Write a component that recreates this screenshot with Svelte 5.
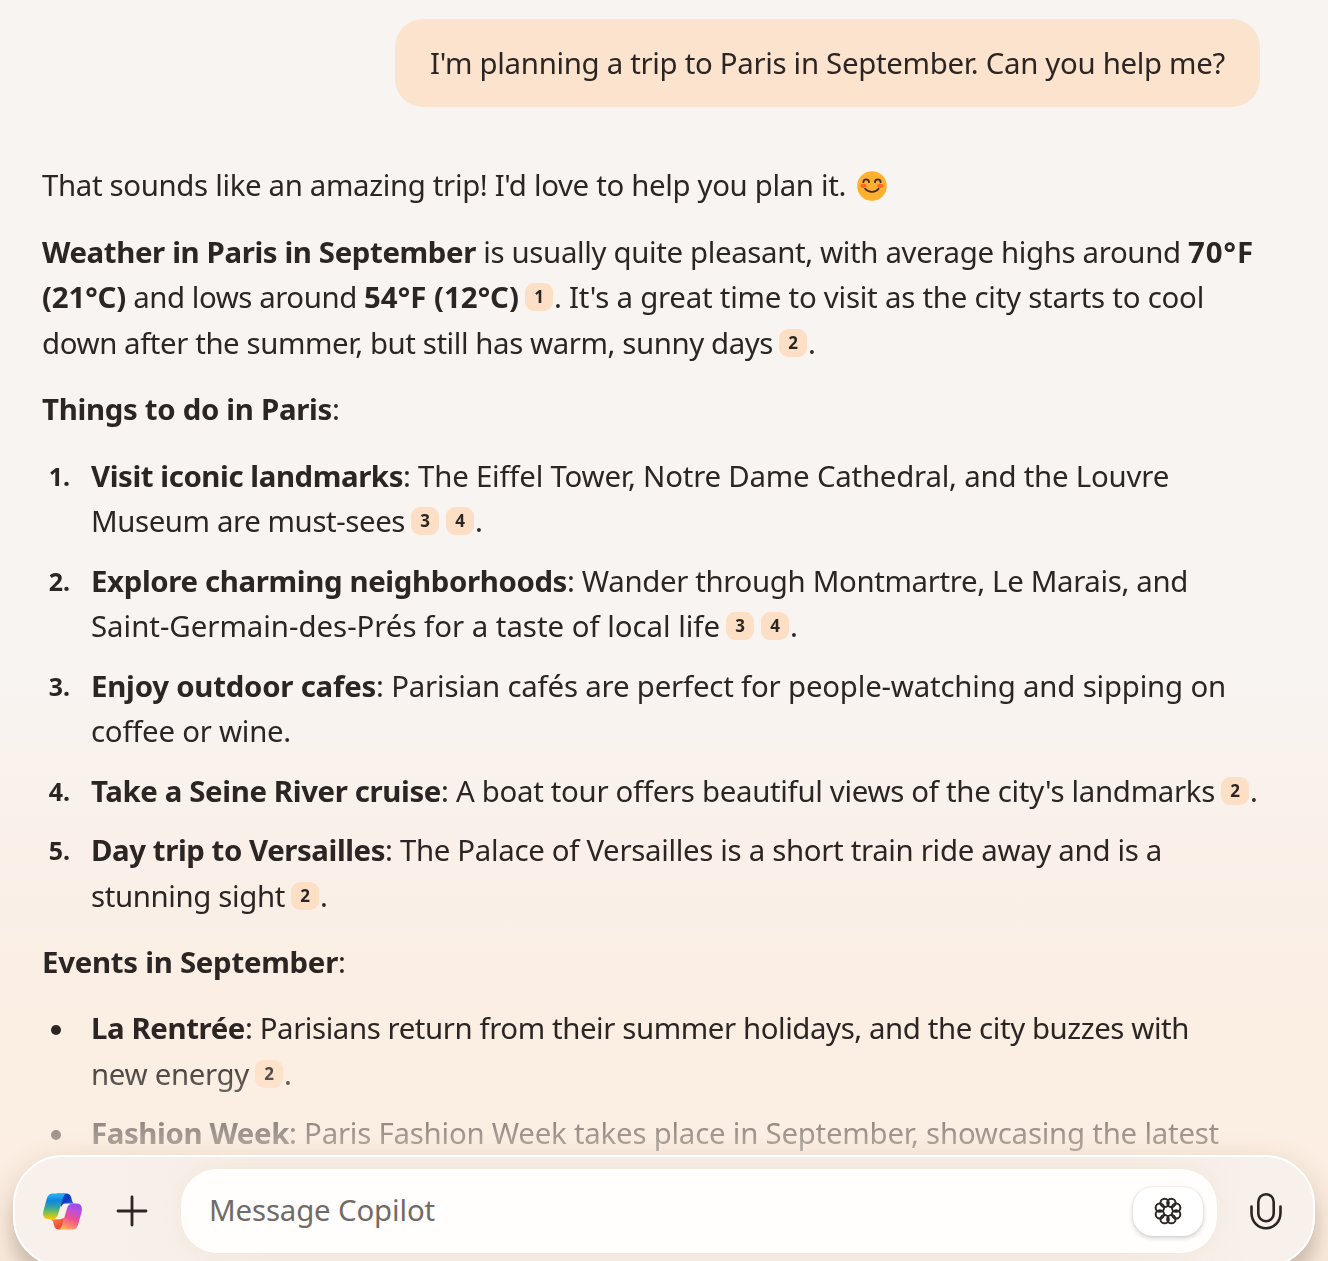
<script>
  // Run kinds: t = regular text, b = bold text, c = citation badge, e = smiling emoji.
  // w is the advance width of the run in pixels.
  const t = (text, w) => ({ kind: 't', text, w });
  const b = (text, w) => ({ kind: 'b', text, w });
  const c = (text) => ({ kind: 'c', text });
  const dot = t('.', 8);

  const prompt = [t("I'm planning a trip to Paris in September. Can you help me?", 795)];

  const intro = [
    [[t("That sounds like an amazing trip! I'd love to help you plan it.", 804), { kind: 'e' }]],
    [
      [b('Weather in Paris in September', 434), t(' is usually quite pleasant, with average highs around ', 712), b('70°F', 66)],
      [b('(21°C)', 84), t(' and lows around ', 238), b('54°F (12°C)', 155), c('1'), t(". It's a great time to visit as the city starts to cool", 650)],
      [t('down after the summer, but still has warm, sunny days', 731), c('2'), dot]
    ],
    [[b('Things to do in Paris', 290), t(':', 8)]]
  ];

  const things = [
    [
      [b('Visit iconic landmarks', 312), t(': The Eiffel Tower, Notre Dame Cathedral, and the Louvre', 766)],
      [t('Museum are must-sees', 314), c('3'), c('4'), dot]
    ],
    [
      [b('Explore charming neighborhoods', 476), t(': Wander through Montmartre, Le Marais, and', 621)],
      [t('Saint-Germain-des-Prés for a taste of local life', 629), c('3'), c('4'), dot]
    ],
    [
      [b('Enjoy outdoor cafes', 285), t(': Parisian cafés are perfect for people-watching and sipping on', 850)],
      [t('coffee or wine.', 200)]
    ],
    [[b('Take a Seine River cruise', 350), t(": A boat tour offers beautiful views of the city's landmarks", 774), c('2'), dot]],
    [
      [b('Day trip to Versailles', 294), t(': The Palace of Versailles is a short train ride away and is a', 777)],
      [t('stunning sight', 194), c('2'), dot]
    ]
  ];

  const eventsTitle = [b('Events in September', 296), t(':', 8)];
  const events = [
    [
      [b('La Rentrée', 154), t(': Parisians return from their summer holidays, and the city buzzes with', 944)],
      [t('new energy', 158), c('2'), dot]
    ],
    [[b('Fashion Week', 198), t(': Paris Fashion Week takes place in September, showcasing the latest', 930)]]
  ];

  const petals = Array.from({ length: 8 }, (_, i) => {
    const a = ((i + 0.5) * Math.PI) / 4;
    return { x: 14 + 8.8 * Math.cos(a), y: 14 + 8.8 * Math.sin(a) };
  });

  // Spreads the letters of a run over its advance width.
  function fit(node, width) {
    const natural = node.getBoundingClientRect().width;
    node.style.letterSpacing = (width - natural) / [...node.textContent].length + 'px';
  }
</script>

{#snippet line(runs)}
  <div class="line">
    {#each runs as r}
      {#if r.kind === 'c'}
        <span class="cite">{r.text}</span>
      {:else if r.kind === 'e'}
        <svg class="emoji" viewBox="0 0 30 30">
          <circle cx="15" cy="15" r="14.8" fill="#ffb02e" />
          <ellipse cx="6.5" cy="14.8" rx="3.1" ry="2.1" fill="#ff6723" />
          <ellipse cx="23.3" cy="14.8" rx="3.1" ry="2.1" fill="#ff6723" />
          <path d="M6.4 11.2Q6.4 8.4 9.2 8.4T12 11.2M18 11.2Q18 8.4 20.8 8.4T23.6 11.2M8.2 17.8Q10.6 20.8 15 20.8T21.6 17.8" fill="none" stroke="#402a32" stroke-width="1.8" stroke-linecap="round" />
        </svg>
      {:else}
        <span class="run" class:bold={r.kind === 'b'} use:fit={r.w}>{r.text}</span>
      {/if}
    {/each}
  </div>
{/snippet}

<div class="page">
  <main class="chat">
    <div class="bubble">{@render line(prompt)}</div>

    <article class="answer">
      {#each intro as para}
        <section>{#each para as l}{@render line(l)}{/each}</section>
      {/each}

      <ol class="list">
        {#each things as item, i}
          <li>
            <span class="marker">{i + 1}.</span>
            <div>{#each item as l}{@render line(l)}{/each}</div>
          </li>
        {/each}
      </ol>

      <section>{@render line(eventsTitle)}</section>

      <ul class="list">
        {#each events as item}
          <li>
            <span class="marker"><i class="bullet"></i></span>
            <div>{#each item as l}{@render line(l)}{/each}</div>
          </li>
        {/each}
      </ul>
    </article>
  </main>

  <footer class="composer">
    <svg class="logo" viewBox="0 0 39 37">
      <defs>
        <linearGradient id="lg-left" x1="0" y1="0" x2="0" y2="1">
          <stop offset="0" stop-color="#2bb4f3" />
          <stop offset=".28" stop-color="#0d87dc" />
          <stop offset=".55" stop-color="#36a6a0" />
          <stop offset=".78" stop-color="#90c43a" />
          <stop offset="1" stop-color="#fdc80a" />
        </linearGradient>
        <linearGradient id="lg-right" x1=".7" y1="0" x2=".3" y2="1">
          <stop offset="0" stop-color="#9a4df0" />
          <stop offset=".25" stop-color="#bd50d8" />
          <stop offset=".55" stop-color="#ee5090" />
          <stop offset=".8" stop-color="#fd8170" />
          <stop offset="1" stop-color="#ffb557" />
        </linearGradient>
        <linearGradient id="lg-top" x1="0" y1="0" x2="1" y2="1">
          <stop offset="0" stop-color="#0b52c6" />
          <stop offset=".5" stop-color="#1437bf" />
          <stop offset="1" stop-color="#2584ee" />
        </linearGradient>
        <linearGradient id="lg-bottom" x1="0" y1="0" x2="1" y2="1">
          <stop offset="0" stop-color="#ff9a4c" />
          <stop offset=".55" stop-color="#ef5638" />
          <stop offset="1" stop-color="#d93843" />
        </linearGradient>
      </defs>
      <path d="M14 .5H23.5Q27 .5 28 4L29.3 8.5Q29.8 10.3 32 10.5H22Q19.2 10.5 18.3 14L15 9Z" fill="url(#lg-top)" />
      <path d="M8.5 26.2H17L24.5 24L21 33Q19.8 36.5 16 36.5Q12.3 36.5 11.2 33L9.9 28.5Q9.3 26.5 7 26.2Z" fill="url(#lg-bottom)" />
      <path d="M9.5 .5H24.2Q21.3 .8 20.2 4.3L15 21.5Q13.6 26.2 9.5 26.2H5.6Q-1.2 26.2 .4 18L3.7 6Q5.2 .5 9.5 .5Z" fill="url(#lg-left)" />
      <path d="M29.5 36.5H14.8Q17.7 36.2 18.8 32.7L24 15.5Q25.4 10.5 29.5 10.5H33.4Q40.2 10.5 38.6 19L35.3 31Q33.8 36.5 29.5 36.5Z" fill="url(#lg-right)" />
    </svg>

    <svg class="plus" viewBox="0 0 32 32">
      <path d="M16 2V30M2 16H30" />
    </svg>

    <div class="field">
      <span class="placeholder" use:fit={226}>Message Copilot</span>
      <div class="mode">
        <svg class="flower" viewBox="0 0 28 28">
          {#each petals as p}
            <circle cx={p.x} cy={p.y} r="4.2" />
          {/each}
        </svg>
      </div>
    </div>

    <svg class="mic" viewBox="0 0 32 38">
      <rect x="8.3" y="2.2" width="15.4" height="27" rx="7.7" />
      <path d="M1.5 14.5V20.5C1.5 30 8 36.3 16 36.3S30.5 30 30.5 20.5V14.5" />
    </svg>
  </footer>
</div>

<style>
  :global(html), :global(body) { margin: 0; overflow: hidden; }
  .page {
    height: 1261px;
    display: flex;
    flex-direction: column;
    overflow: hidden;
    background: linear-gradient(#f8f4f1 0, #f8f4f1 680px, #faf0e9 850px, #fbeee3 1020px, #fceee2 1160px, #f8eadc 1261px);
    color: #2b2624;
    font: 29.4px/45.7px "Noto Sans", "Open Sans", sans-serif;
  }
  .chat {
    flex: 0 0 1155px;
    box-sizing: border-box;
    padding: 19px 0 0 42px;
    overflow: hidden;
    -webkit-mask-image: linear-gradient(#000 1045px, rgba(0, 0, 0, .3) 1155px);
    mask-image: linear-gradient(#000 1045px, rgba(0, 0, 0, .3) 1155px);
  }
  .bubble {
    box-sizing: border-box;
    width: 865px;
    height: 88px;
    margin-left: 353px;
    padding: 21.5px 35px;
    border-radius: 28px;
    background: #fce3ce;
  }
  .answer { padding-top: 56.3px; }
  section { margin-bottom: 20.7px; }
  .line { display: flex; align-items: center; height: 45.7px; white-space: pre; }
  .run { flex: none; }
  .bold { font-weight: 700; }
  .emoji { width: 30px; height: 30px; margin: -1px 0 0 11px; }
  .cite {
    flex: none;
    width: 28px;
    height: 28px;
    margin: -2px 1px 0 6px;
    border-radius: 9px;
    background: #fddfc5;
    font-size: 17px;
    font-weight: 700;
    line-height: 28px;
    text-align: center;
  }
  .list { margin: 0 0 20.7px; padding: 0; list-style: none; }
  li { display: flex; margin-bottom: 13.6px; }
  .marker {
    flex: none;
    width: 28px;
    margin-right: 21px;
    font-size: 25px;
    font-weight: 700;
    text-align: right;
  }
  .bullet {
    display: block;
    width: 10px;
    height: 10px;
    margin: 18.5px 0 0 9px;
    border-radius: 50%;
    background: currentColor;
  }
  .composer {
    flex: none;
    box-sizing: border-box;
    height: 112px;
    margin: 0 13px;
    padding: 0 30px 0 28px;
    display: flex;
    align-items: center;
    border: 2px solid #fff;
    border-radius: 50px;
    background: linear-gradient(90deg, #f7f0eb, #f7f0eb 8%, #f5ece4 20%, #f5ece4 85%, #f7f0eb 95%);
    box-shadow: 0 10px 32px rgba(100, 70, 45, .2), 0 18px 14px rgba(80, 60, 45, .14);
  }
  .logo { width: 39px; height: 37px; }
  .plus { width: 32px; height: 32px; margin: 0 33.5px; }
  .plus path, .flower circle, .mic { fill: none; stroke: #2b2624; stroke-linecap: round; }
  .plus path { stroke-width: 2.8; }
  .field {
    flex: none;
    box-sizing: border-box;
    width: 1036px;
    height: 84px;
    padding: 0 14px 0 28px;
    display: flex;
    align-items: center;
    justify-content: space-between;
    border-radius: 36px;
    background: #fffefc;
    box-shadow: 0 0 16px rgba(240, 220, 195, .35);
  }
  .placeholder { color: #716b67; white-space: pre; }
  .mode {
    display: flex;
    align-items: center;
    justify-content: center;
    width: 70px;
    height: 49px;
    border-radius: 20px;
    background: #fff;
    box-shadow: 0 2px 5px rgba(0, 0, 0, .18), 0 0 2px rgba(0, 0, 0, .1);
  }
  .flower { width: 28px; height: 28px; }
  .flower circle { stroke-width: 2; }
  .mic { width: 32px; height: 38px; margin-left: 33px; stroke-width: 2.6; }
</style>
